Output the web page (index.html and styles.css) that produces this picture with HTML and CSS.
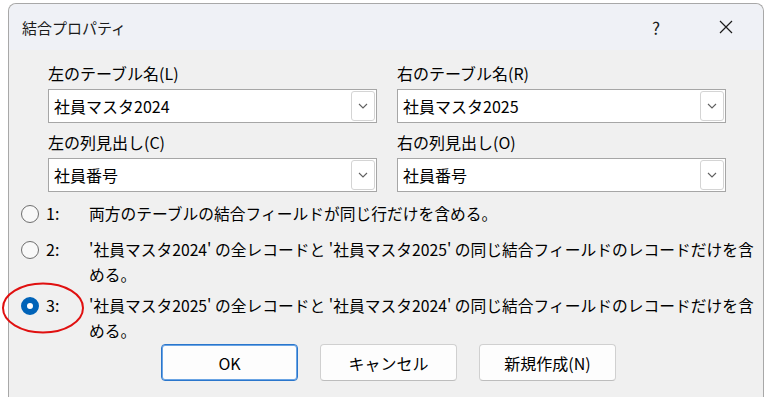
FILE: index.html
```html
<!DOCTYPE html>
<html lang="ja">
<head>
  <meta charset="UTF-8">
  <title>結合プロパティ</title>
  <link rel="stylesheet" href="styles.css">
</head>
<body>
  <div class="dialog">
    <div class="titlebar">
      <span class="title">結合プロパティ</span>
      <span class="help">?</span>
      <span class="close">
        <svg width="14" height="14" viewBox="0 0 14 14"><path d="M1 1L13 13M13 1L1 13" stroke="#1b1b1b" stroke-width="1.2" fill="none"/></svg>
      </span>
    </div>

    <div class="content">
      <div class="fields">
        <div class="field">
          <div class="label">左のテーブル名(L)</div>
          <div class="combo"><span class="value">社員マスタ2024</span><span class="drop"><svg width="10" height="6" viewBox="0 0 10 6"><path d="M1 1L5 5L9 1" stroke="#606060" stroke-width="1.1" fill="none"/></svg></span></div>
        </div>
        <div class="field">
          <div class="label">右のテーブル名(R)</div>
          <div class="combo"><span class="value">社員マスタ2025</span><span class="drop"><svg width="10" height="6" viewBox="0 0 10 6"><path d="M1 1L5 5L9 1" stroke="#606060" stroke-width="1.1" fill="none"/></svg></span></div>
        </div>
        <div class="field">
          <div class="label">左の列見出し(C)</div>
          <div class="combo"><span class="value">社員番号</span><span class="drop"><svg width="10" height="6" viewBox="0 0 10 6"><path d="M1 1L5 5L9 1" stroke="#606060" stroke-width="1.1" fill="none"/></svg></span></div>
        </div>
        <div class="field">
          <div class="label">右の列見出し(O)</div>
          <div class="combo"><span class="value">社員番号</span><span class="drop"><svg width="10" height="6" viewBox="0 0 10 6"><path d="M1 1L5 5L9 1" stroke="#606060" stroke-width="1.1" fill="none"/></svg></span></div>
        </div>
      </div>

      <div class="options">
        <div class="option opt-1">
          <span class="radio"></span>
          <span class="num">1:</span>
          <span class="text">両方のテーブルの結合フィールドが同じ行だけを含める。</span>
        </div>
        <div class="option opt-2">
          <span class="radio"></span>
          <span class="num">2:</span>
          <span class="text">'社員マスタ2024' の全レコードと '社員マスタ2025' の同じ結合フィールドのレコードだけを含<br>める。</span>
        </div>
        <div class="option opt-3">
          <span class="radio checked"></span>
          <span class="num">3:</span>
          <span class="text">'社員マスタ2025' の全レコードと '社員マスタ2024' の同じ結合フィールドのレコードだけを含<br>める。</span>
          <svg class="mark" width="84" height="54" viewBox="0 0 84 54"><ellipse cx="42" cy="27" rx="40" ry="24.5" stroke="#e01010" stroke-width="2" fill="none"/></svg>
        </div>
      </div>

      <div class="buttons">
        <button class="btn default">OK</button>
        <button class="btn">キャンセル</button>
        <button class="btn">新規作成(N)</button>
      </div>
    </div>
  </div>
</body>
</html>
```

FILE: styles.css
```css
body { margin: 0; background: #fff; font-family: "Noto Sans CJK JP", "Noto Sans", sans-serif; color: #000; overflow: hidden; }
.dialog { position: relative; margin: 3px 0 0 8px; width: 756px; height: 394px; box-sizing: border-box; border: 1px solid #a8a8a8; border-bottom: none; border-radius: 8px 8px 0 0; background: #f0f0f0; }
.titlebar { height: 46px; display: flex; align-items: center; padding-left: 13px; background: #eff1f6; border-radius: 8px 8px 0 0; }
.title { font-size: 15px; color: #1b1b1b; flex: 1; }
.help { font-size: 17px; color: #1b1b1b; width: 20px; text-align: center; margin-right: 53px; }
.close { width: 14px; height: 14px; margin-right: 30px; display: flex; }

.content { padding: 4px 0 0 39px; }
.fields { display: grid; grid-template-columns: 329px 329px; column-gap: 20px; }
.label { height: 35px; display: flex; align-items: flex-end; padding-bottom: 5px; box-sizing: border-box; font-size: 16px; line-height: 22px; }
.combo { height: 34px; box-sizing: border-box; border: 1px solid #a6a6a6; background: #fff; display: flex; align-items: center; padding: 0 1px 0 5px; }
.value { flex: 1; font-size: 16px; }
.drop { width: 24px; height: 30px; box-sizing: border-box; border: 1px solid #d4d4d4; border-radius: 3px; display: flex; align-items: center; justify-content: center; }

.options { margin: 9px 0 0 -27px; }
.option { position: relative; display: grid; grid-template-columns: 18px 36px auto; column-gap: 7px; align-items: start; font-size: 16px; line-height: 25px; white-space: nowrap; }
.option .text { font-size: 15.75px; }
.opt-1 { height: 36px; }
.opt-2 { height: 56px; }
.radio { width: 18px; height: 18px; box-sizing: border-box; margin-top: 4px; border-radius: 50%; border: 1px solid #6e6e6e; background: #f8f8f8; }
.radio.checked { border: 6px solid #0063b8; background: #fff; }
.mark { position: absolute; left: -20px; top: -12px; }

.buttons { display: flex; gap: 22px; margin: 1px 0 0 113px; }
.btn { width: 137px; height: 37px; border: 1px solid #d0d0d0; border-bottom-color: #bdbdbd; border-radius: 4px; background: #fdfdfd; font-family: inherit; font-size: 16px; color: #000; }
.btn.default { border: 1px solid #2a76cc; box-shadow: inset 0 0 0 1px #6aa4e4; }
```
